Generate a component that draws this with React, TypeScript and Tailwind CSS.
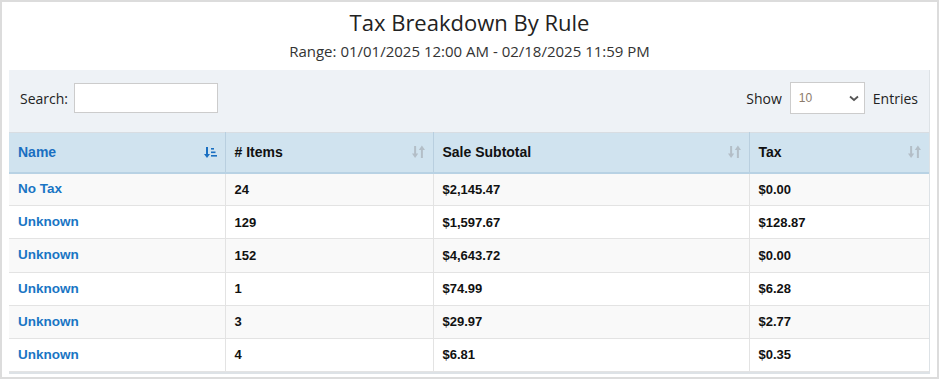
import React from "react";

const rows = [
  ["No Tax", "24", "$2,145.47", "$0.00"],
  ["Unknown", "129", "$1,597.67", "$128.87"],
  ["Unknown", "152", "$4,643.72", "$0.00"],
  ["Unknown", "1", "$74.99", "$6.28"],
  ["Unknown", "3", "$29.97", "$2.77"],
  ["Unknown", "4", "$6.81", "$0.35"],
];

function SortActive() {
  return (
    <svg width="13" height="13" viewBox="0 0 13 13" fill="#1a6fc1">
      <rect x="2" y="1" width="2" height="8" />
      <polygon points="0,8 6,8 3,12" />
      <rect x="7" y="2" width="3" height="1.6" />
      <rect x="7" y="5.5" width="4.5" height="1.6" />
      <rect x="7" y="9" width="6" height="1.6" />
    </svg>
  );
}

function SortIdle() {
  return (
    <svg width="13" height="14" viewBox="0 0 13 14" fill="#b3bec7">
      <rect x="2.1" y="1" width="2" height="8.5" />
      <polygon points="0,8.5 6.2,8.5 3.1,13" />
      <rect x="8.9" y="4.5" width="2" height="8.5" />
      <polygon points="6.8,5 13,5 9.9,0.5" />
    </svg>
  );
}

export default function App() {
  const cols = ["w-[216px]", "w-[208px]", "w-[316px]", ""];
  return (
    <div className="w-[939px] h-[379px] border-2 border-[#dcdcdc] bg-white px-[7px] pt-[6px] pb-[3px] box-border" style={{ fontFamily: '"Open Sans", sans-serif' }}>
      <div className="text-center text-[22px] leading-[28px] text-[#222]">Tax Breakdown By Rule</div>
      <div className="text-center text-[15px] leading-[20px] text-[#333] mt-[5px]">Range: 01/01/2025 12:00 AM - 02/18/2025 11:59 PM</div>
      <div className="mt-[9px] bg-[#eef2f6] border-r border-[#dde2e6]">
        <div className="h-[62px] flex items-center justify-between pl-[11px] pr-[11px] pb-[6px] text-[14px] text-[#222]">
          <div className="flex items-center gap-[6px]">
            <span>Search:</span>
            <div className="w-[144px] h-[30px] bg-white border border-[#cccccc]" />
          </div>
          <div className="flex items-center">
            <span>Show</span>
            <div className="ml-[8px] w-[75px] h-[32px] bg-white border border-[#cccccc] flex items-center justify-between pl-[8px] pr-[4px]">
              <span className="text-[12px] text-[#8c7b6b]" style={{ fontFamily: '"Liberation Sans", Arial, sans-serif' }}>10</span>
              <svg width="12" height="12" viewBox="0 0 12 12" fill="none" stroke="#555" strokeWidth="1.8"><path d="M2 4.5 L6 8 L10 4.5" /></svg>
            </div>
            <span className="ml-[8px]">Entries</span>
          </div>
        </div>
        <table className="w-full border-collapse text-[13px] font-bold" style={{ fontFamily: '"Liberation Sans", Arial, sans-serif' }}>
          <thead>
            <tr className="bg-[#d0e3ef] h-[40px] border-t border-[#d8dde2] border-b-2 border-b-[#b8d2e4] text-[14px]">
              {["Name", "# Items", "Sale Subtotal", "Tax"].map((h, i) => (
                <th key={h} className={`${cols[i]} text-left pl-[9px] pr-[8px] ${i < 3 ? "border-r border-[#b9cfdf]" : ""}`}>
                  <div className="flex items-center justify-between">
                    <span className={i === 0 ? "text-[#1a6fc1]" : "text-[#111]"}>{h}</span>
                    {i === 0 ? <SortActive /> : <SortIdle />}
                  </div>
                </th>
              ))}
            </tr>
          </thead>
          <tbody>
            {rows.map((r, ri) => (
              <tr key={ri} className={`h-[33.2px] border-b border-[#e3e3e3] ${ri % 2 === 0 ? "bg-[#f9f9f9]" : "bg-white"}`}>
                {r.map((c, ci) => (
                  <td key={ci} className={`pl-[9px] pr-[8px] ${ci < 3 ? "border-r border-[#e3e3e3]" : ""} ${ci === 0 ? "text-[#1a75c4] text-[13.5px]" : "text-[#111]"}`}>{c}</td>
                ))}
              </tr>
            ))}
          </tbody>
        </table>
        <div className="h-[2px] bg-[#dde2e6]" />
      </div>
    </div>
  );
}
